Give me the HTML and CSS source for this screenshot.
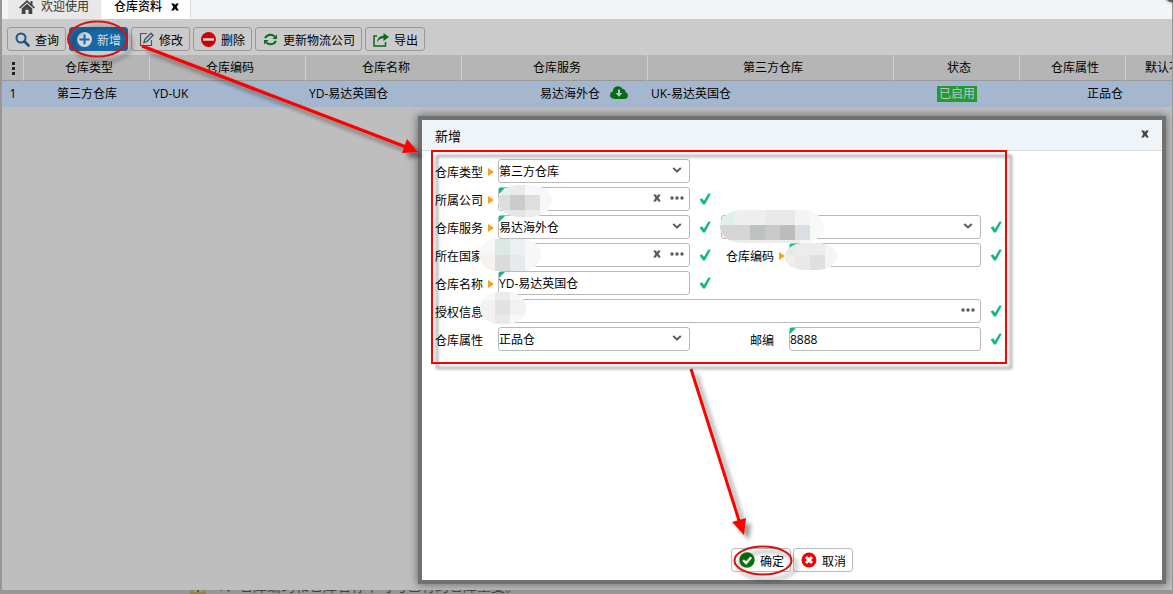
FILE: index.html
```html
<!DOCTYPE html>
<html lang="zh-CN">
<head>
<meta charset="utf-8">
<title>仓库资料</title>
<link rel="stylesheet" href="styles.css">
</head>
<body>
<svg class="defs" aria-hidden="true">
  <symbol id="chevron" viewBox="0 0 10 8"><path d="M1.2 2 L5 5.4 L8.8 2" fill="none" stroke="#595959" stroke-width="1.9"/></symbol>
  <symbol id="check" viewBox="0 0 12 14"><path d="M0.6 7.6 L3 6.2 L5 8.8 L9.4 1.4 L11.8 1.8 L6 12.4 L4 12.6 Z" fill="#12b886"/></symbol>
  <symbol id="cross" viewBox="0 0 8 8"><path d="M0.2 0.5 H3 L4 2.3 L5 0.5 H7.8 L5.6 4 L7.9 7.5 H5.1 L4 5.6 L2.9 7.5 H0.1 L2.4 4 Z" fill="currentColor"/></symbol>
  <symbol id="dots" viewBox="0 0 14 4"><circle cx="2" cy="2" r="1.7"/><circle cx="7" cy="2" r="1.7"/><circle cx="12" cy="2" r="1.7"/></symbol>
</svg>
<div class="page">
  <main class="workspace">
    <nav class="tabs">
      <a class="tab" href="#"><svg width="16" height="14" viewBox="0 0 16 14"><path d="M8 0 L0 7.4 L1.2 8.6 L8 2.5 L14.8 8.6 L16 7.4 L13.5 5 V1 H11.5 V3.2 Z" fill="#444"/><path d="M8 3.8 L2.7 8.4 V14 H6.5 V9.8 H9.5 V14 H13.3 V8.4 Z" fill="#444"/></svg>欢迎使用</a>
      <a class="tab active" href="#">仓库资料<svg width="8" height="8"><use href="#cross"/></svg></a>
    </nav>
    <div class="toolbar">
      <button class="btn"><svg width="15" height="15" viewBox="0 0 15 15"><circle cx="6" cy="6" r="4.5" fill="none" stroke="#1d5484" stroke-width="2"/><path d="M9.5 9.5 L13.5 13.5" stroke="#1d5484" stroke-width="2.6" stroke-linecap="round"/></svg><span>查询</span></button>
      <button class="btn primary"><svg width="15" height="15" viewBox="0 0 15 15"><circle cx="7.5" cy="7.5" r="7.4" fill="#d2d7db"/><path d="M7.5 2.5 V12.5 M2.5 7.5 H12.5" stroke="#1867a3" stroke-width="2"/></svg><span>新增</span></button>
      <button class="btn"><svg width="15" height="15" viewBox="0 0 15 15"><path d="M8 1.5 H1.5 V13.5 H12.5 V8" fill="none" stroke="#555" stroke-width="1.2"/><path d="M5 10.5 L5.8 7.4 L12 1.2 L14 3.2 L8 9.5 Z" fill="none" stroke="#34546b" stroke-width="1.3"/></svg><span>修改</span></button>
      <button class="btn"><svg width="15" height="15" viewBox="0 0 15 15"><circle cx="7.5" cy="7.5" r="7.4" fill="#cb0000"/><path d="M2 7.5 H13" stroke="#ddd" stroke-width="2.4"/></svg><span>删除</span></button>
      <button class="btn"><svg width="15" height="15" viewBox="0 0 15 15"><path d="M2 6 Q4 2.5 8 2.7 Q10.4 3 11.6 4.6" fill="none" stroke="#0b6a1c" stroke-width="2"/><path d="M14 2.5 V7 H9.4 Z" fill="#0b6a1c"/><path d="M13 9 Q11 12.5 7 12.3 Q4.6 12 3.4 10.4" fill="none" stroke="#0b6a1c" stroke-width="2"/><path d="M1 12.5 V8 H5.6 Z" fill="#0b6a1c"/></svg><span>更新物流公司</span></button>
      <button class="btn"><svg width="16" height="15" viewBox="0 0 16 15"><path d="M4 4 H1 V14 H12.5 V10" fill="none" stroke="#0b6a1c" stroke-width="1.5"/><path d="M4 10.5 Q4.4 4 10.5 3.7 V1 L16 5 L10.5 9 V6.3 Q6.5 6.2 4 10.5 Z" fill="#0b6a1c"/></svg><span>导出</span></button>
    </div>
    <table class="grid">
      <colgroup><col class="c-no"><col class="c-126"><col class="c-156"><col class="c-156"><col class="c-186"><col class="c-246"><col class="c-126"><col class="c-106"><col class="c-126"></colgroup>
      <thead><tr><th><svg width="5" height="14" viewBox="0 0 5 14"><path d="M1 1h3v3h-3z M1 6h3v3h-3z M1 11h3v3h-3z" fill="#222"/></svg></th><th>仓库类型</th><th>仓库编码</th><th>仓库名称</th><th>仓库服务</th><th>第三方仓库</th><th>状态</th><th>仓库属性</th><th class="last">默认不</th></tr></thead>
      <tbody><tr><td class="center">1</td><td class="center">第三方仓库</td><td>YD-UK</td><td>YD-易达英国仓</td><td class="service">易达海外仓<svg width="18" height="13" viewBox="0 0 18 13"><path d="M4.5 13 Q0 12.6 0 8.8 Q.2 6 3 5.2 Q2.8 1.2 7 .2 Q11 -.3 12.6 3 Q15.5 3 15.4 6 Q18 6.8 18 9.4 Q17.8 12.6 14.3 13 Z" fill="#076b13"/><path d="M9 3.5 V9" stroke="#b5c5d5" stroke-width="2"/><path d="M5.6 7 H12.4 L9 10.8 Z" fill="#b5c5d5"/></svg></td><td>UK-易达英国仓</td><td class="center"><span class="badge">已启用</span></td><td class="right">正品仓</td><td></td></tr></tbody>
    </table>
  </main>
  <footer class="notice"><svg width="16" height="14" viewBox="0 0 16 14"><path d="M8 1 L15 13 H1 Z" fill="none" stroke="#98804a" stroke-width="2"/><path d="M8 5 V9 M8 10 V12" stroke="#555" stroke-width="2"/></svg><span>1、仓库编码和仓库名称不可与已有的仓库重复。</span></footer>
  <i class="corner"></i>

  <section class="dialog" role="dialog" aria-labelledby="dlg-title">
    <header class="dialog-head"><h1 id="dlg-title">新增</h1><button class="close" aria-label="关闭"><svg width="8" height="8"><use href="#cross"/></svg></button></header>
    <form class="form">
      <label class="req" for="type">仓库类型</label>
      <div class="field"><select id="type"><option>第三方仓库</option></select><span class="tools"><svg width="10" height="8"><use href="#chevron"/></svg></span></div>
      <i></i><i></i><i></i><i></i>

      <label class="req" for="company">所属公司</label>
      <div class="field changed"><input id="company" type="text"><span class="tools"><svg width="8" height="8"><use href="#cross"/></svg><svg width="14" height="4"><use href="#dots"/></svg></span>
        <svg class="mosaic m-company" width="54" height="32"><clipPath id="k1"><rect width="54" height="32" rx="22" ry="16"/></clipPath><g clip-path="url(#k1)"><path fill="#f6f8f7" d="M0 0h54v32H0z"/><path fill="#e6f1ec" d="M0 0h12v10H0z"/><path fill="#dcdddd" d="M0 10h12v15H0z"/><path fill="#dfeee7" d="M0 25h12v7H0z"/><path fill="#e9ebea" d="M12 0h15v10H12z"/><path fill="#cbcbcb" d="M12 10h15v15H12z"/><path fill="#e4e4e4" d="M12 25h15v7H12z"/><path fill="#dedede" d="M27 10h15v15H27z"/><path fill="#ececec" d="M27 25h15v7H27z"/></g></svg></div>
      <svg class="ok" width="12" height="14"><use href="#check"/></svg><i></i><i></i><i></i>

      <label class="req" for="service">仓库服务</label>
      <div class="field changed"><select id="service"><option>易达海外仓</option></select><span class="tools"><svg width="10" height="8"><use href="#chevron"/></svg></span></div>
      <svg class="ok" width="12" height="14"><use href="#check"/></svg>
      <div class="field wide-right"><select id="channel" aria-label="服务渠道"></select><span class="tools"><svg width="10" height="8"><use href="#chevron"/></svg></span>
        <svg class="mosaic m-channel" width="104" height="33"><clipPath id="k2"><rect width="104" height="33" rx="22" ry="16"/></clipPath><g clip-path="url(#k2)"><path fill="#f7f8f8" d="M0 0h104v33H0z"/><path fill="#e2efe9" d="M0 0h15v15H0z"/><path fill="#eeeeee" d="M15 0h30v15H15z"/><path fill="#e9e9e9" d="M45 0h30v15H45z"/><path fill="#f2f4f6" d="M75 0h15v15H75z"/><path fill="#d5d5d5" d="M0 15h30v15H0z"/><path fill="#bdc1c2" d="M30 15h15v15H30z"/><path fill="#c8caca" d="M45 15h15v15H45z"/><path fill="#bcbcbc" d="M60 15h15v15H60z"/><path fill="#dcdee3" d="M75 15h15v15H75z"/><path fill="#ececec" d="M0 30h80v3H0z"/></g></svg></div>
      <svg class="ok" width="12" height="14"><use href="#check"/></svg>

      <label class="req" for="country">所在国家</label>
      <div class="field"><input id="country" type="text"><span class="tools"><svg width="8" height="8"><use href="#cross"/></svg><svg width="14" height="4"><use href="#dots"/></svg></span>
        <svg class="mosaic m-country" width="62" height="32"><clipPath id="k3"><rect width="62" height="32" rx="18" ry="16"/></clipPath><g clip-path="url(#k3)"><path fill="#f7f7f7" d="M0 0h62v32H0z"/><path fill="#f7f2ef" d="M0 16h16v16H0z"/><path fill="#dce9e2" d="M16 0h15v16H16z"/><path fill="#dbdbdb" d="M16 16h15v16H16z"/><path fill="#edf0f2" d="M31 0h15v16H31z"/><path fill="#e7eaed" d="M31 16h15v16H31z"/></g></svg></div>
      <svg class="ok" width="12" height="14"><use href="#check"/></svg>
      <label class="second req" for="code">仓库编码</label>
      <div class="field changed"><input id="code" type="text">
        <svg class="mosaic m-code" width="52" height="27"><clipPath id="k4"><rect width="52" height="27" rx="20" ry="13"/></clipPath><g clip-path="url(#k4)"><path fill="#f4f6f5" d="M0 0h52v27H0z"/><path fill="#e0ece6" d="M0 0h10v12H0z"/><path fill="#f3ece7" d="M0 12h10v15H0z"/><path fill="#ececec" d="M10 0h30v12H10z"/><path fill="#e9e9e9" d="M10 12h15v15H10z"/><path fill="#dfdfdf" d="M25 12h15v15H25z"/></g></svg></div>
      <svg class="ok" width="12" height="14"><use href="#check"/></svg>

      <label class="req" for="name">仓库名称</label>
      <div class="field changed"><input id="name" type="text" value="YD-易达英国仓"></div>
      <svg class="ok" width="12" height="14"><use href="#check"/></svg><i></i><i></i><i></i>

      <label for="auth">授权信息</label>
      <div class="field wide"><input id="auth" type="text"><span class="tools"><svg width="14" height="4"><use href="#dots"/></svg></span>
        <svg class="mosaic m-auth" width="46" height="32"><clipPath id="k5"><rect width="46" height="32" rx="18" ry="16"/></clipPath><g clip-path="url(#k5)"><path fill="#f6f7f7" d="M0 0h46v32H0z"/><path fill="#f1f2f1" d="M0 8h15v24H0z"/><path fill="#e9ecea" d="M15 0h15v8H15z"/><path fill="#e2e2e2" d="M15 8h15v15H15z"/><path fill="#e9e9e9" d="M15 23h15v9H15z"/><path fill="#f1f1f1" d="M30 8h16v15H30z"/></g></svg></div>
      <svg class="ok" width="12" height="14"><use href="#check"/></svg>

      <label for="attr">仓库属性</label>
      <div class="field"><select id="attr"><option>正品仓</option></select><span class="tools"><svg width="10" height="8"><use href="#chevron"/></svg></span></div>
      <i></i>
      <label class="second zip" for="zip">邮编</label>
      <div class="field changed"><input id="zip" type="text" value="8888"></div>
      <svg class="ok" width="12" height="14"><use href="#check"/></svg>
    </form>
    <div class="actions">
      <button class="btn"><svg width="16" height="16" viewBox="0 0 16 16"><circle cx="8" cy="8" r="7.7" fill="#087408"/><path d="M4 8.2 L7 11 L12.2 5.2" fill="none" stroke="#fff" stroke-width="2.4"/></svg><span>确定</span></button>
      <button class="btn"><svg width="16" height="16" viewBox="0 0 16 16"><circle cx="8" cy="8" r="7.5" fill="#f40000"/><path d="M5 5 L11 11 M11 5 L5 11" stroke="#fff" stroke-width="3"/></svg><span>取消</span></button>
    </div>
  </section>

  <svg class="marks" width="1173" height="594" viewBox="0 0 1173 594" aria-hidden="true">
    <defs><filter id="sh" x="-10%" y="-10%" width="130%" height="130%"><feDropShadow dx="5" dy="5" stdDeviation="2" flood-color="#000" flood-opacity=".4"/></filter>
    <filter id="frame-sh" x="-5%" y="-5%" width="115%" height="115%"><feDropShadow dx="5" dy="5" stdDeviation="1.6" flood-color="#000" flood-opacity=".4"/></filter></defs>
    <g filter="url(#sh)" stroke="#f00" fill="none" stroke-width="2">
      <ellipse cx="97.5" cy="39" rx="29.5" ry="17.5" stroke="#e01010"/>
      <ellipse cx="763" cy="560.5" rx="28.5" ry="14" stroke="#e01010"/>
      <path d="M142 46 L406 147" stroke-width="3.4"/>
      <path d="M418 152 L407 139 L402 153 Z" fill="#f00" stroke="none"/>
      <path d="M691 369 L739.5 522" stroke-width="3"/>
      <path d="M744 535 L732 522 L746 518 Z" fill="#f00" stroke="none"/>
    </g>
    <rect filter="url(#frame-sh)" x="432" y="151" width="574" height="212" fill="none" stroke="#f00" stroke-width="2"/>
  </svg>
</div>
</body>
</html>
```

FILE: styles.css
```css
* { box-sizing: border-box; }
body, button, input, select {
  font-family: "Open Sans", "Noto Sans CJK SC", sans-serif;
  font-size: 12px;
  color: #000;
}
body { margin: 0; background: #979797; }
svg { display: block; flex: none; }
.defs { position: absolute; width: 0; height: 0; }
.page {
  position: relative;
  display: flex;
  flex-direction: column;
  height: 100vh;
  overflow: hidden;
}
.workspace {
  flex: 1;
  min-height: 0;
  margin: 0 1px 0 2px;
  background: #bebebe;
  overflow: hidden;
}
.tabs { display: flex; gap: 1px; height: 19px; padding-left: 6px; background: #f3f4f6; }
.tab {
  display: flex;
  align-items: center;
  gap: 6px;
  padding: 0 12px 6px 11px;
  background: #e8e8e8;
  color: #333;
  line-height: 13px;
  text-decoration: none;
}
.tab.active { gap: 9px; background: #fff; color: #000; font-weight: 500; padding: 0 11px 6px 12px; border-right: 1px solid #ddd; }
.toolbar { display: flex; gap: 3px; padding: 8px 5px 4px; background: #cbcbcb; }
.btn {
  display: flex;
  align-items: center;
  gap: 5px;
  height: 24px;
  padding: 0 6px 0 7px;
  border: 1px solid #999;
  border-radius: 3px;
  background: transparent;
  line-height: 16px;
  white-space: nowrap;
}
.btn span { padding-top: 3px; }
.btn.primary { background: #1867a3; border-color: #1867a3; color: #d5dde3; }
.grid { width: 1248px; table-layout: fixed; border-collapse: separate; border-spacing: 0; }
.c-no { width: 22px; }
.c-126 { width: 126px; }
.c-156 { width: 156px; }
.c-186 { width: 186px; }
.c-246 { width: 246px; }
.c-106 { width: 106px; }
.grid th, .grid td { height: 26px; padding: 0 3px; line-height: 18px; font-weight: 400; text-align: left; white-space: nowrap; }
.grid th { padding: 0 0 0 5px; text-align: center; background: #b5b5b5; border-right: 1px solid #cfcfcf; border-bottom: 1px solid #999; }
.grid th.last { padding-left: 19px; text-align: left; }
.grid th svg { margin: 0 auto; }
.grid th:first-child { padding: 0 0 0 2px; }
.grid td { background: #a4b7cf; }
.grid td.center { text-align: center; }
.grid td.right { text-align: right; }
.grid td.service { padding-left: 78px; }
.service svg { display: inline-block; margin-left: 10px; vertical-align: -1px; }
.badge { display: inline-block; padding: 0 2px; line-height: 16px; background: #259b2b; color: #b9c7d2; }
.notice { display: flex; align-items: flex-end; height: 4px; padding-left: 190px; overflow: hidden; font-size: 14px; color: #444; }
.notice span { margin-left: 11px; line-height: 16px; white-space: nowrap; }
.corner { position: absolute; top: -12px; right: -12px; width: 20px; height: 14px; border-radius: 8px; background: #555; box-shadow: 0 0 3px #555; }

.dialog {
  position: absolute;
  top: 120px;
  right: 11px;
  bottom: 14px;
  width: 740px;
  display: flex;
  flex-direction: column;
  background: #fff;
  box-shadow: 0 0 0 4px #717171, 0 0 8px 5px #717171;
}
.dialog-head {
  display: flex;
  align-items: center;
  justify-content: space-between;
  height: 31px;
  padding: 0 13px;
  background: #eef4f8;
  border-bottom: 1px solid #d8d8d8;
}
.dialog-head h1 { margin: 0; font-size: 13px; font-weight: 400; }
.close { padding: 0 0 2px; border: 0; background: none; color: #444; }
.form {
  display: grid;
  grid-template-columns: 63px 192px 31px 68px 192px 1fr;
  row-gap: 4px;
  grid-auto-rows: 24px;
  padding: 8px 13px;
}
.form label { display: flex; align-items: center; gap: 5px; padding-top: 2px; white-space: nowrap; }
.form label.req::after { content: ""; margin-bottom: 1px; border: solid transparent; border-width: 4px 0 4px 6px; border-left-color: #f9a11b; }
.form label.second { padding-left: 5px; }
.form label.zip { padding-left: 29px; }
.field { position: relative; }
.field.wide { grid-column: span 4; }
.field.wide-right { grid-column: span 2; }
.field input, .field select {
  display: block;
  appearance: none;
  width: 100%;
  height: 100%;
  margin: 0;
  padding: 0;
  border: 1px solid #b9b9b9;
  border-radius: 3px;
  background: #fff;
  outline: none;
}
.field.changed::before {
  content: "";
  position: absolute;
  top: 1px;
  left: 1px;
  border: solid transparent;
  border-width: 6px 6px 0 0;
  border-top-color: #12b886;
}
.tools { position: absolute; top: 0; right: 6px; display: flex; align-items: center; gap: 9px; height: 22px; color: #595959; fill: #595959; pointer-events: none; }
.tools svg:only-child { margin-right: 2px; }
.wide .tools svg:only-child { margin-right: 0; }
.ok { margin: 5px 0 0 9px; }
.mosaic { position: absolute; z-index: 1; pointer-events: none; }
.m-company { left: 0; top: -2px; }
.m-channel { left: -1px; top: -5px; }
.m-country { left: -19px; top: -4px; }
.m-code { left: -4px; top: 0; }
.m-auth { left: -18px; top: -7px; }
.actions { display: flex; justify-content: center; gap: 2px; margin-top: auto; padding-bottom: 8px; }
.actions .btn { border-color: #bbb; background: #fff; }
.marks { position: absolute; top: 0; left: 0; pointer-events: none; }
```
